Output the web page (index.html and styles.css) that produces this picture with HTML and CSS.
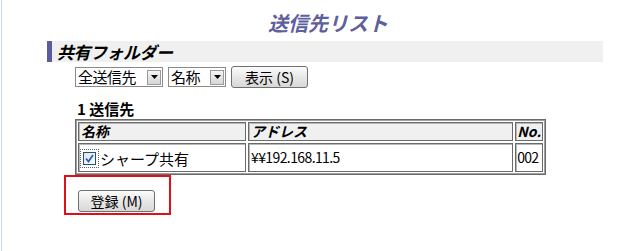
FILE: index.html
```html
<!DOCTYPE html>
<html lang="ja">
<head>
<meta charset="utf-8">
<link rel="stylesheet" href="styles.css">
</head>
<body>
<div class="page">
  <h1 class="title">送信先リスト</h1>
  <div class="section"><span class="bar"></span><span class="section-text">共有フォルダー</span></div>
  <div class="controls">
    <span class="select sel1"><span class="sel-text">全送信先</span><span class="arrow"><svg width="7" height="4" viewBox="0 0 7 4"><path d="M0 0H7L3.5 4Z" fill="#000"/></svg></span></span>
    <span class="select sel2"><span class="sel-text">名称</span><span class="arrow"><svg width="7" height="4" viewBox="0 0 7 4"><path d="M0 0H7L3.5 4Z" fill="#000"/></svg></span></span>
    <span class="btn btn-show">表示 (S)</span>
  </div>
  <div class="count">1 送信先</div>
  <table class="list">
    <tr class="head">
      <th class="c-name">名称</th>
      <th class="c-addr">アドレス</th>
      <th class="c-no">No.</th>
    </tr>
    <tr class="row">
      <td class="c-name"><span class="chk-wrap"><span class="chk"><svg width="11" height="11" viewBox="0 0 11 11"><path d="M2 5.5L4.5 8.5L9 2" fill="none" stroke="#2a5bd0" stroke-width="1.8"/></svg></span></span><span class="name-text">シャープ共有</span></td>
      <td class="c-addr">¥¥192.168.11.5</td>
      <td class="c-no">002</td>
    </tr>
  </table>
  <div class="redbox"><span class="btn btn-reg">登録 (M)</span></div>
</div>
</body>
</html>
```
FILE: styles.css
```css
html, body {
  margin: 0;
  padding: 0;
  background: #fff;
}
body {
  padding-left: 1px;
  font-family: "Noto Sans CJK JP", "DejaVu Sans", sans-serif;
  color: #000;
}
.page {
  border-left: 1px solid #c4dcf2;
  height: 251px;
  box-sizing: border-box;
}
.title {
  margin: 0;
  padding-top: 9px;
  height: 32px;
  text-align: center;
  font-size: 20px;
  line-height: 28px;
  font-style: italic;
  font-weight: bold;
  color: #5f5f9e;
  padding-left: 24px;
}
.section {
  display: flex;
  align-items: stretch;
  margin-left: 45px;
  width: 556px;
  height: 21px;
  background: #f0f0f0;
}
.bar {
  width: 5px;
  background: #5c5c9c;
}
.section-text {
  padding-left: 5px;
  font-size: 17px;
  line-height: 21px;
  font-weight: bold;
  font-style: italic;
  letter-spacing: -0.5px;
}
.controls {
  display: flex;
  align-items: center;
  gap: 5px;
  margin-left: 73px;
  margin-top: 4px;
  height: 22px;
}
.select {
  display: flex;
  align-items: center;
  height: 20px;
  box-sizing: border-box;
  border: 1px solid #8a8a8a;
  background: #fff;
  padding-left: 2px;
}
.sel-text {
  font-size: 15px;
  line-height: 18px;
  letter-spacing: -0.5px;
}
.arrow {
  margin-left: 2px;
  margin-right: 1px;
  width: 14px;
  height: 15px;
  box-sizing: border-box;
  border: 1px solid #9a9a9a;
  background: linear-gradient(#f4f4f4, #d6d6d6);
  display: flex;
  align-items: center;
  justify-content: center;
}
.sel1 { width: 88px; }
.sel2 { width: 58px; }
.sel1 .sel-text, .sel2 .sel-text { flex: 1; }
.btn {
  display: inline-flex;
  align-items: center;
  justify-content: center;
  box-sizing: border-box;
  border: 1px solid #707070;
  border-radius: 3px;
  background: linear-gradient(#fbfbfb, #e8e8e8 50%, #d8d8d8);
  font-size: 14px;
  height: 22px;
}
.btn-show { width: 77px; }
.count {
  margin-left: 75px;
  margin-top: 10px;
  font-size: 15px;
  font-weight: bold;
  line-height: 21px;
  height: 21px;
}
.list {
  margin-left: 73px;
  border-collapse: separate;
  border-spacing: 2px;
  border: 1px solid #6a6a6a;
  outline: 1px solid #a0a0a0;
  outline-offset: -2px;
  width: 471px;
  font-size: 14px;
}
.list th, .list td {
  border: 1px solid #6a6a6a;
  box-shadow: inset 1px 1px 0 #b8b8b8;
  padding: 0 2px;
  text-align: left;
}
.list th {
  background: #f0f0f0;
  font-style: italic;
  font-weight: bold;
  height: 17px;
  line-height: 17px;
}
.list td {
  height: 25px;
  line-height: 25px;
  white-space: nowrap;
}
.list td.c-addr { letter-spacing: -0.6px; }
.list .c-name { width: 162px; }
.list .c-no { width: 20px; padding: 0 1px; }
.list td.c-no { letter-spacing: -0.8px; }
.list td.c-name {
  padding-left: 1px;
}
.list td.c-name, .list td.c-name * { vertical-align: middle; }
.chk-wrap {
  display: inline-block;
  border: 1px dotted #606060;
  padding: 2px;
  margin-right: 1px;
  line-height: 0;
}
.chk {
  display: inline-block;
  width: 13px;
  height: 13px;
  box-sizing: border-box;
  border: 1px solid #1c5180;
  background: linear-gradient(135deg, #dfe5ec, #fff);
  line-height: 0;
}
.name-text { font-size: 15px; }
.redbox {
  margin-left: 62px;
  width: 107px;
  height: 40px;
  box-sizing: border-box;
  border: 2px solid #e0101a;
  padding-left: 12px;
  padding-top: 11px;
}
.btn-reg { width: 77px; height: 22px; font-size: 14px; }
```
